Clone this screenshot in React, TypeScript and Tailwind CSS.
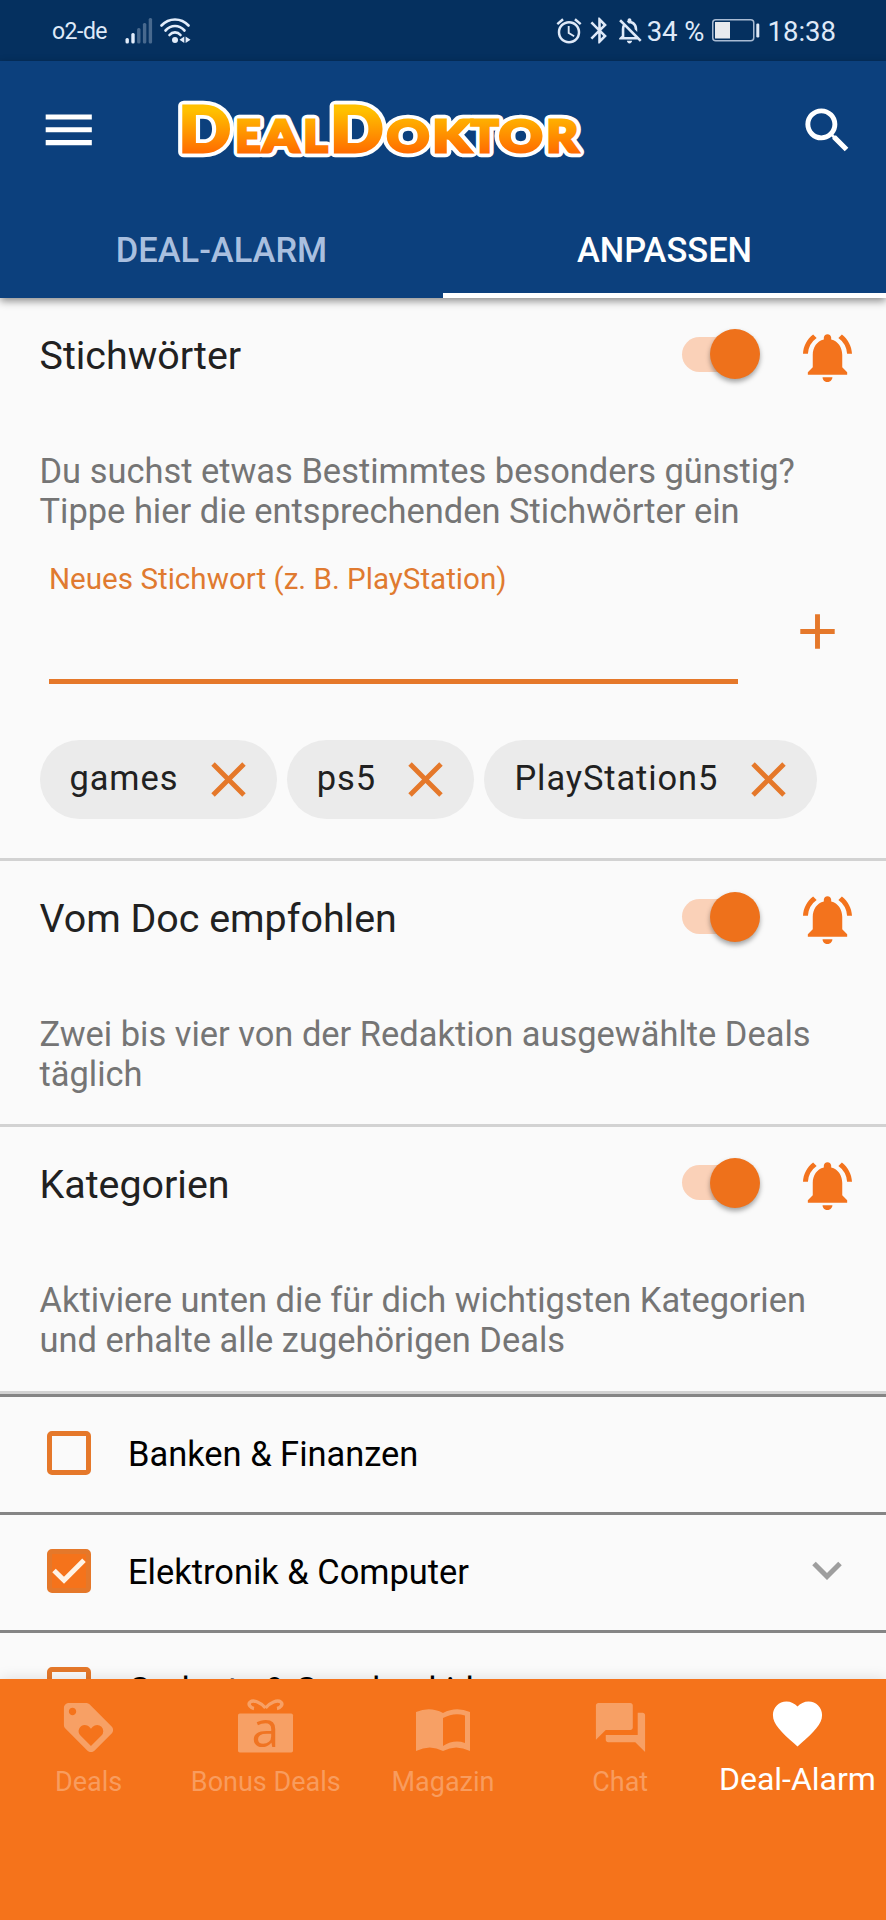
import { useState } from "react";
import type { ReactNode } from "react";
import clsx from "clsx";
import {
  MdAdd,
  MdAlarm,
  MdBluetooth,
  MdClose,
  MdFavorite,
  MdForum,
  MdLoyalty,
  MdMenu,
  MdNotificationsActive,
  MdOutlineNotificationsOff,
  MdSearch,
} from "react-icons/md";

const categories = [
  { name: "Banken & Finanzen", expandable: false },
  { name: "Elektronik & Computer", expandable: true },
  { name: "Gadgets & Geschenkideen", expandable: false },
];

// x position and advance of every glyph of the word mark
const logoGlyphs = [
  { char: "D", x: 1.7, width: 52, big: true },
  { char: "E", x: 58.4, width: 25, big: false },
  { char: "A", x: 85.8, width: 36, big: false },
  { char: "L", x: 126.4, width: 24, big: false },
  { char: "D", x: 153.3, width: 53, big: true },
  { char: "O", x: 209.7, width: 42.5, big: false },
  { char: "K", x: 255.5, width: 38, big: false },
  { char: "T", x: 294, width: 27.5, big: false },
  { char: "O", x: 322, width: 43.5, big: false },
  { char: "R", x: 369.4, width: 31.5, big: false },
];

function Logo() {
  return (
    <svg width="412" height="64" viewBox="0 0 412 64" className="overflow-visible">
      <defs>
        <linearGradient id="logo-fill" gradientUnits="userSpaceOnUse" x1="0" y1="8" x2="0" y2="56">
          <stop offset="0.1" stopColor="#ffc000" />
          <stop offset="1" stopColor="#ff6a00" />
        </linearGradient>
      </defs>
      <use href="#logo-word" stroke="#fff" strokeWidth="10.5" strokeLinejoin="round" />
      <use href="#logo-word" stroke="url(#logo-fill)" strokeWidth="3" />
      <g id="logo-word" fill="url(#logo-fill)" fontFamily="Lato" fontWeight="900">
        {logoGlyphs.map((g, i) => (
          <text key={i} x={g.x} y="54" fontSize={g.big ? 62 : 44.5} textLength={g.width} lengthAdjust="spacingAndGlyphs">
            {g.char}
          </text>
        ))}
      </g>
    </svg>
  );
}

function SignalIcon() {
  return (
    <svg width="28" height="26" viewBox="0 0 28 26" fill="#e3edfb">
      <rect x="0.5" y="20" width="3.4" height="5.5" rx="1.5" />
      <rect x="6.3" y="15" width="3.4" height="10.5" rx="1.5" />
      <g opacity="0.3">
        <rect x="12.1" y="10" width="3.4" height="15.5" rx="1.5" />
        <rect x="17.9" y="5" width="3.4" height="20.5" rx="1.5" />
        <rect x="23.7" y="0" width="3.4" height="25.5" rx="1.5" />
      </g>
    </svg>
  );
}

function WifiIcon() {
  return (
    <svg width="31" height="26" viewBox="0 0 31 26" fill="none" stroke="#e3edfb" strokeWidth="2.6" strokeLinecap="round">
      <path d="M1.5 7.5C9 -0.5 21 -0.5 28.5 7.5" />
      <path d="M5.5 12.5C11 6.5 19 6.5 24.5 12.5" />
      <path d="M9.5 17C12.5 13.5 17.5 13.5 20.5 17" />
      <circle cx="15" cy="22" r="3" fill="#e3edfb" stroke="none" />
      <path d="M24.3 18.5V25L19.5 21.8ZM25.6 18.5V25L30.5 21.8Z" fill="#e3edfb" stroke="none" />
    </svg>
  );
}

function BatteryIcon() {
  return (
    <svg width="48" height="23" viewBox="0 0 48 23">
      <rect x="0.75" y="0.75" width="41" height="21" rx="3" fill="none" stroke="#a9bbd3" strokeWidth="1.5" />
      <rect x="3" y="3" width="15" height="16.5" fill="#e8eaee" />
      <rect x="44.3" y="4.5" width="3" height="14" rx="1.2" fill="#dfe8f5" />
    </svg>
  );
}

function GiftIcon() {
  return (
    <svg width="56" height="54" viewBox="0 0 56 54">
      <path
        d="M27.5 9C23 3.5 15.5 0.5 12.2 3C9.3 5.5 13 9 16 9.5M27.5 9C32 3.5 39.5 0.5 42.8 3C45.7 5.5 42 9 39 9.5"
        fill="none"
        stroke="currentColor"
        strokeWidth="3.4"
      />
      <rect x="0" y="14.5" width="55" height="39" rx="1.8" fill="currentColor" />
      <text x="27.5" y="48" textAnchor="middle" fontSize="50" fill="#f07422" fontFamily="Open Sans">
        a
      </text>
    </svg>
  );
}

function BookIcon() {
  return (
    <svg width="54" height="43" viewBox="0 0 54 43" fill="currentColor">
      <path
        fillRule="evenodd"
        d="M0 3Q14 -3 27 4Q40 -3 54 3V42Q40 35 27 42Q14 35 0 42ZM27 9V37Q38 30 49 34V6.5Q38 3 27 9Z"
      />
    </svg>
  );
}

function Switch({ on, onChange }: { on: boolean; onChange: () => void }) {
  return (
    <button onClick={onChange} className="relative -top-[2px] flex h-[50px] w-[78px] items-center">
      <span className={clsx("h-[35px] w-[72px] rounded-full", on ? "bg-[#fad1b8]" : "bg-[#b5b5b5]")} />
      <span
        className={clsx(
          "absolute top-0 h-[50px] w-[50px] rounded-full shadow-[0_3px_5px_rgba(0,0,0,0.35)]",
          on ? "right-0 bg-[#ee711b]" : "left-0 bg-[#ececec]"
        )}
      />
    </button>
  );
}

function Section({ title, text, children }: { title: string; text: string; children?: ReactNode }) {
  const [on, setOn] = useState(true);

  return (
    <section className="border-b-[3px] border-[#d2d2d2]">
      <div className="flex h-[116px] items-center pr-[29.5px] pl-[39.5px]">
        <h2 className="flex-1 text-[39.4px] leading-[46px] text-[#212121]">{title}</h2>
        <Switch on={on} onChange={() => setOn(!on)} />
        <MdNotificationsActive size={59} className="relative top-px ml-[38px] text-[#f3731d]" />
      </div>
      <p className="mt-[37px] px-[39.5px] text-[34.45px] leading-[40.4px] whitespace-pre-line text-[#757575]">{text}</p>
      {children}
    </section>
  );
}

function Checkbox({ checked }: { checked: boolean }) {
  return (
    <span
      className={clsx(
        "flex h-[44px] w-[44px] items-center justify-center rounded-[5px] border-[5px] border-[#e5782a]",
        checked && "bg-[#f5731b]"
      )}
    >
      {checked && (
        <svg width="34" height="26" viewBox="0 0 34 26" fill="none" stroke="#fff3e6" strokeWidth="5" className="shrink-0">
          <path d="M2 12.5L12 22.3L32 2.3" />
        </svg>
      )}
    </span>
  );
}

export default function App() {
  const [keywords, setKeywords] = useState(["games", "ps5", "PlayStation5"]);
  const [checked, setChecked] = useState(["Elektronik & Computer"]);

  const toggleCategory = (name: string) => {
    setChecked(prev => (prev.includes(name) ? prev.filter(c => c !== name) : [...prev, name]));
  };

  return (
    <div className="flex h-[1920px] w-[886px] flex-col overflow-hidden bg-[#fafafa] font-['Roboto',sans-serif]">
      {/* Statusleiste */}
      <div className="flex h-[61px] shrink-0 items-center bg-[#05305f] pr-[50px] pl-[52px] text-[#dfe9f8]">
        <span className="pt-[2px] text-[23px] leading-[30px] tracking-[-0.5px]">o2-de</span>
        <span className="ml-[18px]"><SignalIcon /></span>
        <span className="ml-[7px]"><WifiIcon /></span>
        <div className="ml-auto flex items-center">
          <MdAlarm size={30} />
          <MdBluetooth size={31} />
          <MdOutlineNotificationsOff size={31} className="ml-[-1px]" />
          <span className="ml-[2px] pt-[2px] text-[27.5px] leading-[32px]">34 %</span>
          <span className="ml-[7px]"><BatteryIcon /></span>
          <span className="ml-[8px] pt-[2px] text-[27.5px] leading-[32px]">18:38</span>
        </div>
      </div>

      {/* Kopfbereich */}
      <header className="relative z-10 h-[237px] shrink-0 bg-[#0c407d] text-white shadow-[0_3px_8px_rgba(0,0,0,0.45)]">
        <div className="flex h-[138px] items-center pr-[29.5px] pl-[38px]">
          <MdMenu size={61.5} />
          <span className="ml-[77px]"><Logo /></span>
          <MdSearch size={59} className="ml-auto" />
        </div>
        <div className="grid h-[99px] grid-cols-2 text-center text-[34.45px] leading-[40px] font-medium">
          <button className="border-b-[5px] border-transparent pt-[7px] text-[#a9bfdf]">DEAL-ALARM</button>
          <button className="border-b-[5px] border-white pt-[7px]">ANPASSEN</button>
        </div>
      </header>

      {/* Einstellungen */}
      <main className="min-h-0 flex-1 overflow-hidden">
        <Section
          title="Stichwörter"
          text={"Du suchst etwas Bestimmtes besonders günstig?\nTippe hier die entsprechenden Stichwörter ein"}
        >
          <div className="mt-[30px] flex h-[122px] pl-[49px]">
            <label className="w-[689px] border-b-[5px] border-[#e5782a] text-[29.6px] leading-[34.6px] text-[#e07a30]">
              Neues Stichwort (z. B. PlayStation)
            </label>
            <button className="mt-[40px] ml-[49.5px] h-[59px] text-[#e5782a]">
              <MdAdd size={59} />
            </button>
          </div>
          <div className="mt-[56px] mb-[39px] flex h-[79px] gap-[10px] pl-[39.5px]">
            {keywords.map(word => (
              <span
                key={word}
                className="flex items-center rounded-full bg-[#ebebeb] pr-[19px] pl-[30px] text-[34.45px] tracking-[0.9px] text-[#212121]"
              >
                {word}
                <button onClick={() => setKeywords(keywords.filter(k => k !== word))} className="ml-[20.5px] text-[#e5782a]">
                  <MdClose size={59} />
                </button>
              </span>
            ))}
          </div>
        </Section>

        <Section title="Vom Doc empfohlen" text={"Zwei bis vier von der Redaktion ausgewählte Deals\ntäglich"}>
          <div className="h-[29px]" />
        </Section>

        <Section
          title="Kategorien"
          text={"Aktiviere unten die für dich wichtigsten Kategorien\nund erhalte alle zugehörigen Deals"}
        >
          <div className="h-[30.5px]" />
        </Section>

        {categories.map(c => (
          <div
            key={c.name}
            onClick={() => toggleCategory(c.name)}
            className="flex h-[118px] items-center border-t-[3px] border-[#858585] pr-[44px] pb-[3px] pl-[47px] text-[34.45px] text-black"
          >
            <Checkbox checked={checked.includes(c.name)} />
            <span className="ml-[37px] flex-1 pt-[3px] leading-[40px]">{c.name}</span>
            {c.expandable && (
              <svg width="30" height="19" viewBox="0 0 30 19" fill="none" stroke="#9e9e9e" strokeWidth="5">
                <path d="M2 2.5L15 15.5L28 2.5" />
              </svg>
            )}
          </div>
        ))}
      </main>

      {/* Navigation */}
      <nav className="relative z-10 grid h-[241px] shrink-0 grid-cols-5 bg-[#f5731b] text-[27px] leading-[32px] whitespace-nowrap text-[#f89c5e] shadow-[0_0_14px_rgba(0,0,0,0.12)]">
        <div className="flex flex-col items-center pt-[19px]">
          <MdLoyalty size={59} className="text-[#f7a065]" />
          <span className="mt-[9px]">Deals</span>
        </div>
        <div className="flex flex-col items-center pt-[20px]">
          <span className="flex h-[58px] text-[#f7a065]"><GiftIcon /></span>
          <span className="mt-[9px]">Bonus Deals</span>
        </div>
        <div className="flex flex-col items-center pt-[30px]">
          <span className="flex h-[48px] text-[#f7a065]"><BookIcon /></span>
          <span className="mt-[9px]">Magazin</span>
        </div>
        <div className="flex flex-col items-center pt-[19px]">
          <MdForum size={59} className="text-[#f7a065]" />
          <span className="mt-[9px]">Chat</span>
        </div>
        <div className="flex flex-col items-center pt-[15px] text-white">
          <MdFavorite size={59} />
          <span className="mt-[7px] text-[32px] leading-[38px]">Deal-Alarm</span>
        </div>
      </nav>
    </div>
  );
}
